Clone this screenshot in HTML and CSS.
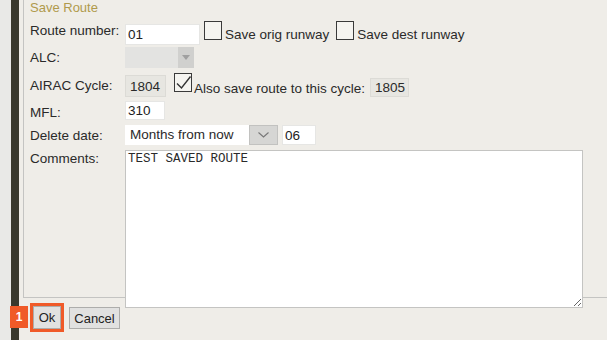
FILE: index.html
```
<!DOCTYPE html>
<html lang="en">
<head>
    <meta charset="UTF-8">
    <title>Save Route</title>
    <link rel="stylesheet" href="styles.css">
</head>
<body>
    <div class="screen">
        <div class="backdrop"></div>
        <div class="rail"></div>
        <div class="dialog">
            <div class="frame">
                <div class="title">Save Route</div>

                <div class="row row-route">
                    <span class="label">Route number:</span>
                    <input class="text route-input" type="text" value="01">
                    <span class="check check-route"></span>
                    <span class="opt opt-route">Save orig runway</span>
                    <span class="check check-route check-gap"></span>
                    <span class="opt opt-route">Save dest runway</span>
                </div>

                <div class="row row-alc">
                    <span class="label">ALC:</span>
                    <div class="select select-alc">
                        <span class="select-value"></span>
                        <span class="select-arrow">
                            <svg width="8" height="5" viewBox="0 0 8 5"><path d="M0 0h8L4 5z" fill="#a0a0a0"/></svg>
                        </span>
                    </div>
                </div>

                <div class="row row-airac">
                    <span class="label">AIRAC Cycle:</span>
                    <span class="ro ro-cycle">1804</span>
                    <span class="check check-airac">
                        <svg width="17" height="17" viewBox="0 0 17 17"><path d="M2 9.5 L6.5 14 L15.5 2.5" fill="none" stroke="#333" stroke-width="1.4"/></svg>
                    </span>
                    <span class="opt opt-airac">Also save route to this cycle:</span>
                    <span class="ro ro-next">1805</span>
                </div>

                <div class="row row-mfl">
                    <span class="label">MFL:</span>
                    <input class="text mfl-input" type="text" value="310">
                </div>

                <div class="row row-delete">
                    <span class="label">Delete date:</span>
                    <div class="select select-delete">
                        <span class="select-value">Months from now</span>
                        <span class="select-arrow">
                            <svg width="11" height="6" viewBox="0 0 11 6"><path d="M0.5 0.5 L5.5 5 L10.5 0.5" fill="none" stroke="#777" stroke-width="1.1"/></svg>
                        </span>
                    </div>
                    <input class="text months-input" type="text" value="06">
                </div>

                <div class="row row-comments">
                    <span class="label">Comments:</span>
                    <textarea class="comments">TEST SAVED ROUTE</textarea>
                </div>
            </div>

            <div class="actions">
                <span class="badge">1</span>
                <button class="btn btn-ok">Ok</button>
                <button class="btn btn-cancel">Cancel</button>
            </div>
        </div>
    </div>
</body>
</html>
```
FILE: styles.css
```
body {
    margin: 0;
    font-family: "Liberation Sans", Arial, sans-serif;
    font-size: 13.5px;
    color: #2a2a2a;
    overflow: hidden;
}
.screen {
    display: flex;
    height: 340px;
    width: 607px;
    overflow: hidden;
}
.backdrop {
    width: 11px;
    background: #e9e9e7;
}
.rail {
    width: 8px;
    background: #3a392e;
}
.dialog {
    flex: 1;
    position: relative;
    background: #efede8;
}
.frame {
    height: 297px;
    margin-left: 4px;
    margin-right: -20px;
    padding-left: 6px;
    border-left: 1px solid #c4c4c2;
    border-bottom: 1px solid #c4c4c2;
}
.title {
    font-size: 13px;
    line-height: 15px;
    color: #b09a4c;
    margin-bottom: 6px;
}
.row {
    display: flex;
    align-items: flex-start;
    line-height: 15px;
}
.label {
    width: 95px;
    flex: none;
}
.row-route { height: 25px; }
.row-alc { height: 23px; }
.row-airac { height: 31px; }
.row-mfl { height: 22px; }
.row-delete { height: 28px; }

.text {
    box-sizing: border-box;
    font-family: "Liberation Sans", Arial, sans-serif;
    font-size: 13.5px;
    color: #222;
    background: #fff;
    border: 1px solid #e6e6e4;
    padding: 0 2px;
    margin: 0;
    outline: none;
}
.check {
    box-sizing: border-box;
    display: block;
    width: 18px;
    height: 19px;
    border: 1px solid #3a3a3a;
    background: #f5f4f0;
}
.check svg {
    display: block;
}
.opt {
    white-space: nowrap;
}

.row-route .label { margin-top: 2px; }
.route-input { width: 75px; height: 21px; margin-top: 3px; }
.check-route { margin-left: 4px; }
.check-gap { margin-left: 7px; }
.opt-route { margin-top: 6px; margin-left: 3px; }

.row-alc .label { margin-top: 4px; }
.select {
    box-sizing: border-box;
    display: flex;
}
.select-value {
    flex: 1;
    padding-left: 5px;
    white-space: nowrap;
}
.select-arrow {
    display: flex;
    align-items: center;
    justify-content: center;
}
.select-alc {
    width: 69px;
    height: 21px;
    margin-top: 1px;
    background: #e3e3e1;
}
.select-alc .select-arrow {
    width: 16px;
    background: #d0d0ce;
}

.row-airac .label { margin-top: 9px; }
.ro {
    box-sizing: border-box;
    background: #e7e6e1;
    border: 1px solid #dcdbd6;
    padding-left: 4px;
}
.ro-cycle { width: 41px; height: 22px; line-height: 21px; margin-top: 6px; }
.check-airac { margin-top: 4px; margin-left: 8px; }
.opt-airac { margin-top: 12px; margin-left: 2px; }
.ro-next { width: 39px; height: 19px; line-height: 18px; margin-top: 9px; margin-left: 5px; }

.row-mfl .label { margin-top: 5px; }
.mfl-input { width: 40px; height: 19px; margin-top: 1px; }

.row-delete .label { margin-top: 6px; }
.select-delete {
    width: 153px;
    height: 20px;
    margin-top: 3px;
    background: #fff;
    line-height: 20px;
}
.select-delete .select-arrow {
    width: 29px;
    background: #d6d6d4;
    border: 1px solid #c2c2c0;
    box-sizing: border-box;
}
.months-input { width: 34px; height: 20px; margin-top: 3px; margin-left: 4px; }

.row-comments .label { margin-top: 1px; }
.comments {
    box-sizing: border-box;
    width: 458px;
    height: 158px;
    margin: 0;
    padding: 1px 2px;
    border: 1px solid #c4c4c2;
    background: #fff;
    font-family: "Liberation Mono", "Courier New", monospace;
    font-size: 12.5px;
    color: #2a2a2a;
    outline: none;
}

.actions {
    display: flex;
    align-items: flex-start;
    padding-left: 14px;
}
.btn {
    box-sizing: border-box;
    font-family: "Liberation Sans", Arial, sans-serif;
    font-size: 13px;
    color: #222;
    background: #e1e1e0;
    border: 1px solid #adadab;
    padding: 0;
    margin: 0;
}
.btn-ok {
    width: 28px;
    height: 23px;
    margin-top: 8px;
    outline: 3px solid #f05a28;
}
.btn-cancel {
    width: 51px;
    height: 22px;
    margin-top: 9px;
    margin-left: 8px;
}
.badge {
    position: absolute;
    left: -9px;
    top: 306px;
    width: 18px;
    height: 22px;
    background: #f05a28;
    color: #fff;
    font-weight: bold;
    font-size: 12px;
    line-height: 22px;
    text-align: center;
}
```
